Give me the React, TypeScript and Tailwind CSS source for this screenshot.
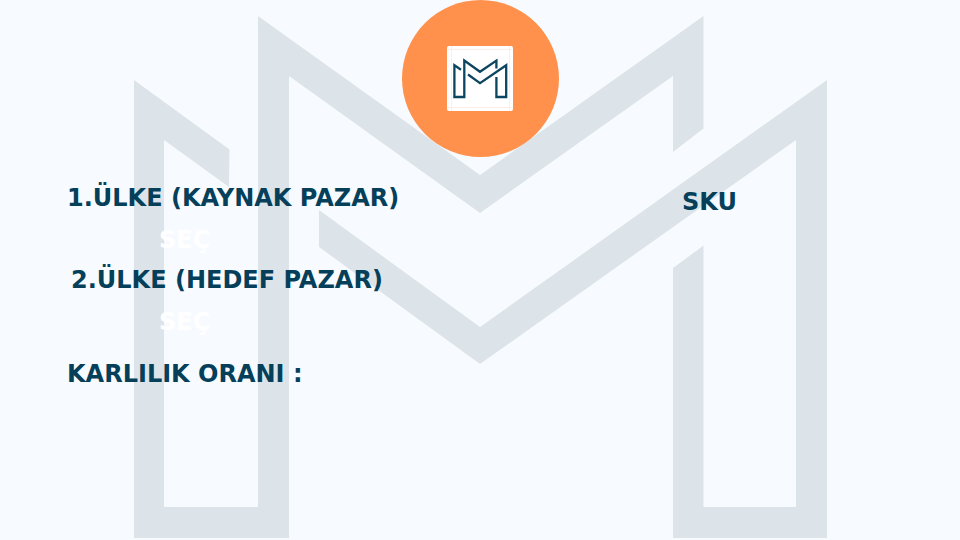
const INK = "text-[#053f5a]";
const LABEL = `text-2xl leading-8 font-bold whitespace-nowrap ${INK}`;

function Monogram({ className }: { className: string }) {
  return (
    <svg viewBox="0 0 960 540" className={className} fill="currentColor" aria-hidden="true">
      <path d="M134 80 229.5 149.5 229 187 164 140V507H258V16L480 175 703.5 16V128.5L673 152V76L480 213 289 76V538H134Z" />
      <path d="M319 210 480 327 827 80V538H673V268L703.5 245.5V507H796V140L480 364 319 247Z" />
    </svg>
  );
}

function Badge() {
  return (
    <div className="flex h-[157px] w-[157px] items-center justify-center rounded-full bg-[#ff914d]">
      <svg viewBox="0 0 66 66" className="h-[66px] w-[66px]" role="img" aria-label="M">
        <rect width="66" height="65" rx="2" fill="#fff" />
        <path d="M0 3.5H66M0 61.5H66M4.5 0V65M62.5 0V65" stroke="#fdeee6" strokeWidth="1" />
        <g fill="none" stroke="#0b4560" strokeWidth="2.3">
          <path d="M14 23.8 7.4 19.2V51H17.3V14.5L33 25.8 49.4 14.6V22.5" />
          <path d="M21 28.5 33 37.2 59.2 19.2V51H49.4V31" />
        </g>
      </svg>
    </div>
  );
}

function Market({ id, title, className }: { id: string; title: string; className: string }) {
  return (
    <div className="flex flex-col items-start gap-2.5">
      <h2 id={id} className={`${LABEL} ${className}`}>{title}</h2>
      <button
        type="button"
        aria-describedby={id}
        className="ml-[92px] cursor-pointer text-2xl leading-8 font-bold text-white"
      >
        SEÇ
      </button>
    </div>
  );
}

export default function App() {
  return (
    <div className="relative isolate min-h-screen overflow-hidden bg-[#f7fbff] font-['DejaVu_Sans','Inter',sans-serif]">
      <Monogram className="absolute inset-0 -z-10 h-full w-full text-[#dce4e9]" />
      <header className="flex justify-center">
        <Badge />
      </header>
      <main className="grid grid-cols-[7fr_3fr] pt-[25px]">
        <section className="flex flex-col gap-2 pl-[67px]">
          <Market id="source" title="1.ÜLKE (KAYNAK PAZAR)" className="" />
          <Market id="target" title="2.ÜLKE (HEDEF PAZAR)" className="pl-1" />
          <h2 className={`${LABEL} pt-3`}>KARLILIK ORANI :</h2>
        </section>
        <section className="pt-1 pl-2.5">
          <h2 className={LABEL}>SKU</h2>
        </section>
      </main>
    </div>
  );
}
